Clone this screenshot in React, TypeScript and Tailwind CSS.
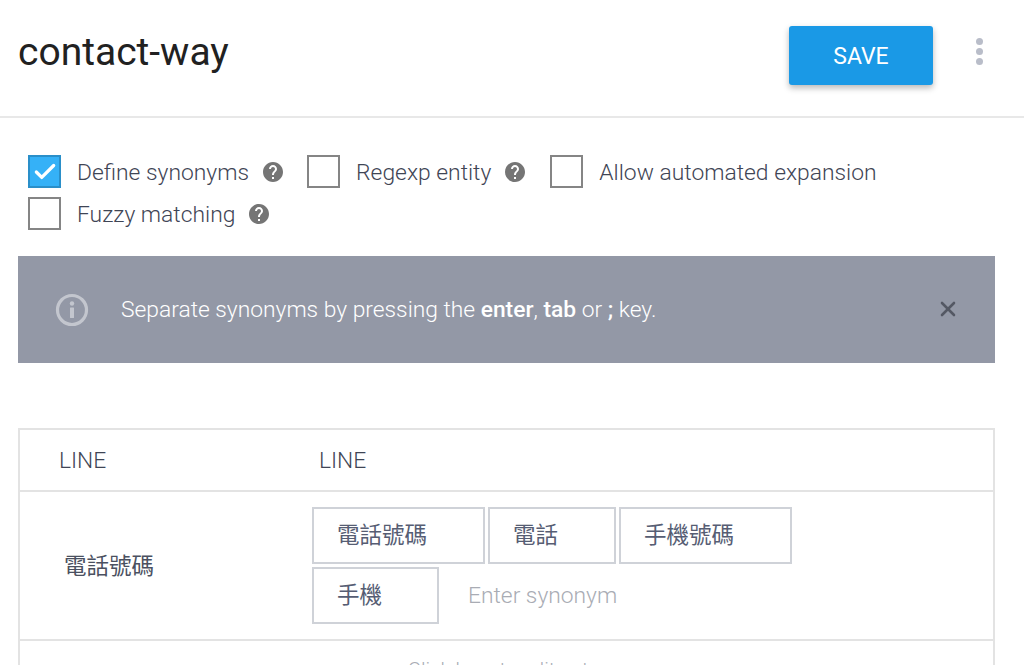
import { Check, X } from 'lucide-react';

const font = "font-['Roboto','Noto_Sans_CJK_TC',sans-serif]";

const HelpIcon = () => (
  <svg viewBox="0 0 24 24" className="w-[24px] h-[24px] fill-[#757575] shrink-0">
    <path d="M12 2C6.48 2 2 6.48 2 12s4.48 10 10 10 10-4.48 10-10S17.52 2 12 2zm1 17h-2v-2h2v2zm2.07-7.75l-.9.92C13.45 12.9 13 13.5 13 15h-2v-.5c0-1.1.45-2.1 1.17-2.83l1.24-1.26c.37-.36.59-.86.59-1.41 0-1.1-.9-2-2-2s-2 .9-2 2H8c0-2.21 1.79-4 4-4s4 1.79 4 4c0 .88-.36 1.68-.93 2.25z" />
  </svg>
);

const Box = ({ checked }: { checked?: boolean }) =>
  checked ? (
    <span className="w-[33px] h-[33px] shrink-0 flex items-center justify-center bg-[#35b1f7] border-2 border-[#2a8fc9]">
      <Check className="w-[26px] h-[26px] text-white" strokeWidth={3} />
    </span>
  ) : (
    <span className="w-[33px] h-[33px] shrink-0 bg-white border-2 border-[#858585]" />
  );

const Option = ({ label, checked, help, className }: { label: string; checked?: boolean; help?: boolean; className?: string }) => (
  <div className={`flex items-center h-[33px] ${className ?? ''}`}>
    <Box checked={checked} />
    <span className="ml-4 pt-[3px] text-[22.85px] font-light text-[#3f4555] leading-none whitespace-nowrap">{label}</span>
    {help && <span className="ml-[12px]"><HelpIcon /></span>}
  </div>
);

const Chip = ({ text, w }: { text: string; w: string }) => (
  <div className={`h-[57px] ${w} border-2 border-[#cfd2d8] flex items-center pl-[23px] text-[22.5px] text-[#565d73] leading-none`}>
    {text}
  </div>
);

export default function App() {
  return (
    <div className={`${font} w-[1024px] h-[665px] overflow-hidden bg-white`}>
      <header className="h-[118px] border-b-2 border-[#e8e8e8] flex items-start pl-[18px]">
        <h1 className="mt-[27px] text-[39px] leading-[50px] text-[#212121] font-normal">contact-way</h1>
        <button className="ml-auto mt-[26px] pt-[3px] w-[144px] h-[59px] bg-[#1a99e6] rounded-[3px] text-white text-[23px] shadow-[0_3px_6px_rgba(0,0,0,0.28)]">
          SAVE
        </button>
        <div className="ml-[43px] mr-[41px] mt-[38px] flex flex-col gap-[3px]">
          <span className="w-[7px] h-[7px] rounded-full bg-[#b9bdc9]" />
          <span className="w-[7px] h-[7px] rounded-full bg-[#b9bdc9]" />
          <span className="w-[7px] h-[7px] rounded-full bg-[#b9bdc9]" />
        </div>
      </header>

      <div className="pl-[28px] pt-[37px] flex flex-col gap-[9px]">
        <div className="flex">
          <Option label="Define synonyms" checked help />
          <Option label="Regexp entity" help className="ml-[22px]" />
          <Option label="Allow automated expansion" className="ml-[23px]" />
        </div>
        <Option label="Fuzzy matching" help />
      </div>

      <div className="mt-[26px] ml-[18px] w-[977px] h-[107px] bg-[#9398a6] flex items-center">
        <svg viewBox="0 0 34 34" className="ml-[37px] w-[34px] h-[34px] shrink-0">
          <circle cx="17" cy="17" r="14.5" fill="none" stroke="#c3c6ce" strokeWidth="3.2" />
          <circle cx="17" cy="10.5" r="2.2" fill="#c3c6ce" />
          <rect x="15" y="14.5" width="4" height="10.5" rx="0.5" fill="#c3c6ce" />
        </svg>
        <p className="ml-[32px] pt-[2px] text-[22.8px] font-light text-white leading-none whitespace-nowrap">
          Separate synonyms by pressing the <b className="font-medium">enter</b>, <b className="font-medium">tab</b> or <b className="font-medium">;</b> key.
        </p>
        <X className="ml-auto mr-[35px] mb-[2px] w-[24px] h-[24px] text-[#545864]" strokeWidth={2.6} />
      </div>

      <div className="mt-[65px] ml-[18px] w-[977px] border-2 border-[#e3e3e3]">
        <div className="h-[60px] pt-[3px] flex items-center text-[22.8px] font-light text-[#3f4555] leading-none">
          <span className="ml-[39px] w-[260px]">LINE</span>
          <span>LINE</span>
        </div>
        <div className="h-[151px] border-y-2 border-[#e3e3e3] flex items-center">
          <span className="ml-[44px] w-[248px] pt-[2px] text-[22.5px] text-[#4a5060] leading-none">電話號碼</span>
          <div className="flex flex-col gap-[3px]">
            <div className="flex gap-[3px]">
              <Chip text="電話號碼" w="w-[173px]" />
              <Chip text="電話" w="w-[128px]" />
              <Chip text="手機號碼" w="w-[173px]" />
            </div>
            <div className="flex items-center">
              <Chip text="手機" w="w-[127px]" />
              <span className="ml-[29px] pt-[2px] text-[22.8px] font-light text-[#a9acb4] leading-none">Enter synonym</span>
            </div>
          </div>
        </div>
        <div className="pt-[19px] text-center text-[20.4px] font-light text-[#a9acb4] leading-none">Click here to edit entry</div>
      </div>
    </div>
  );
}
